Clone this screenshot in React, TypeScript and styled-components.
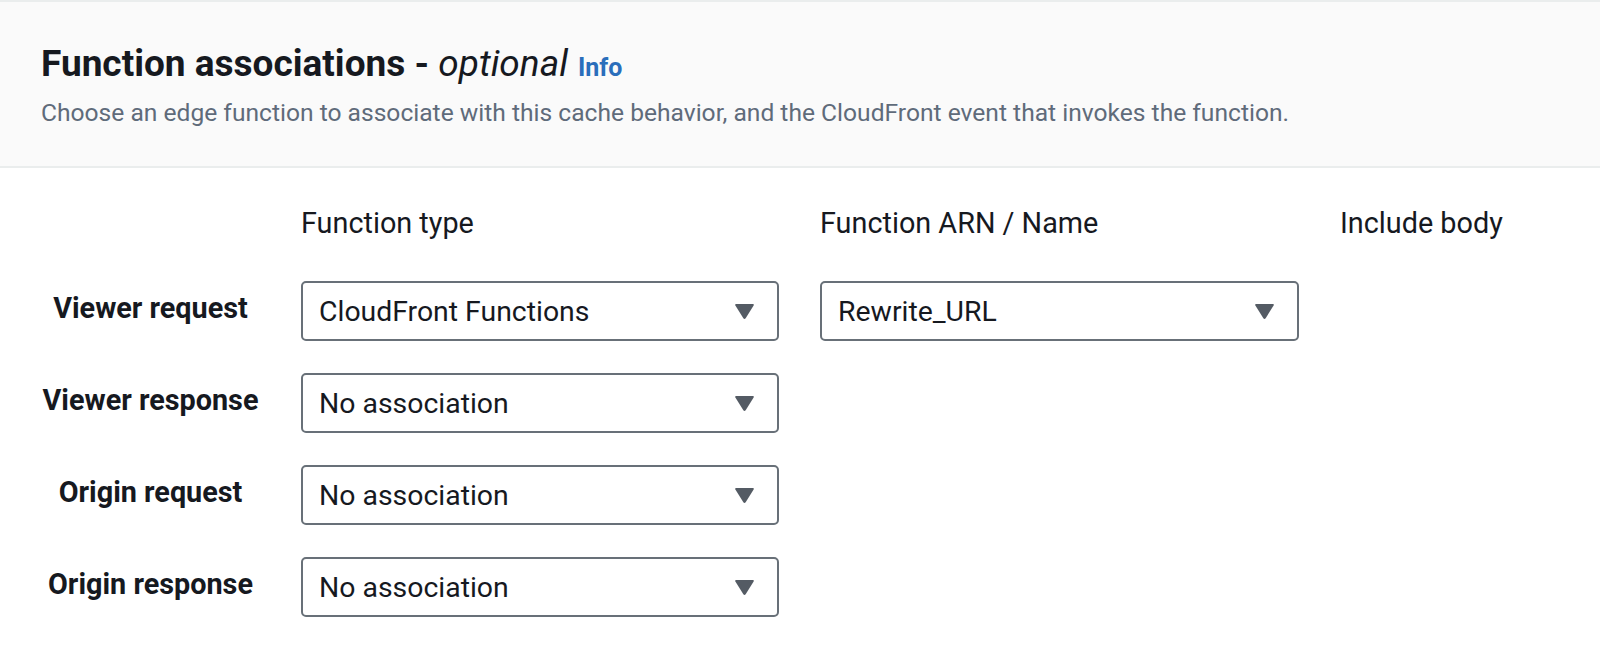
import React from "react";
import styled, { createGlobalStyle } from "styled-components";

const GlobalStyle = createGlobalStyle`
  html, body {
    margin: 0;
    padding: 0;
    background: #ffffff;
  }
  body {
    font-family: Roboto, "Liberation Sans", Arial, sans-serif;
    color: #16191f;
    -webkit-font-smoothing: antialiased;
  }
`;

const Page = styled.div`
  width: 1600px;
  min-height: 660px;
  background: #ffffff;
`;

const Header = styled.header`
  background: #fafafa;
  border-top: 2px solid #eaeded;
  border-bottom: 2px solid #eaeded;
  padding: 40px 40px 0 41px;
  height: 124px;
`;

const Title = styled.h2`
  margin: 0;
  font-size: 37px;
  line-height: 44px;
  font-weight: 700;
  color: #16191f;
  display: flex;
  align-items: baseline;
`;

const Optional = styled.i`
  font-weight: 400;
  font-style: italic;
`;

const InfoLink = styled.a`
  margin-left: 10px;
  font-size: 25px;
  font-weight: 700;
  color: #2a6ebb;
  text-decoration: none;
`;

const Description = styled.p`
  margin: 5px 0 0;
  font-size: 24.6px;
  line-height: 36px;
  color: #5f6b7a;
`;

const Grid = styled.div`
  display: grid;
  grid-template-columns: 219px 478px 479px auto;
  column-gap: 41px;
  row-gap: 32px;
  padding: 35px 0 0 41px;
  align-items: center;
`;

const ColumnHeading = styled.div`
  font-size: 28.8px;
  line-height: 40px;
  color: #16191f;
  margin-bottom: 6px;
`;

const RowLabel = styled.div`
  font-size: 28.8px;
  line-height: 36px;
  font-weight: 700;
  color: #16191f;
  text-align: center;
  margin-top: -6px;
`;

const SelectBox = styled.div`
  box-sizing: border-box;
  height: 60px;
  border: 2px solid #687078;
  border-radius: 5px;
  background: #ffffff;
  display: flex;
  align-items: center;
  justify-content: space-between;
  padding: 0 22px 0 16px;
  font-size: 28.4px;
  color: #16191f;
`;

const SelectValue = styled.span`
  white-space: nowrap;
`;

const Caret = () => (
  <svg width="21" height="18" viewBox="0 0 21 18" aria-hidden="true">
    <path
      d="M2.2 2 H18.8 Q20.4 2 19.6 3.4 L11.8 16 Q10.5 17.8 9.2 16 L1.4 3.4 Q0.6 2 2.2 2 Z"
      fill="#545b64"
    />
  </svg>
);

const Select: React.FC<{ value: string }> = ({ value }) => (
  <SelectBox>
    <SelectValue>{value}</SelectValue>
    <Caret />
  </SelectBox>
);

const Empty = styled.div``;

const rows: { label: string; type: string; arn?: string }[] = [
  { label: "Viewer request", type: "CloudFront Functions", arn: "Rewrite_URL" },
  { label: "Viewer response", type: "No association" },
  { label: "Origin request", type: "No association" },
  { label: "Origin response", type: "No association" },
];

export default function App() {
  return (
    <Page>
      <GlobalStyle />
      <Header>
        <Title>
          Function associations&nbsp;-&nbsp;<Optional>optional</Optional>
          <InfoLink href="#">Info</InfoLink>
        </Title>
        <Description>
          Choose an edge function to associate with this cache behavior, and the CloudFront event that invokes the function.
        </Description>
      </Header>
      <Grid>
        <Empty />
        <ColumnHeading>Function type</ColumnHeading>
        <ColumnHeading>Function ARN / Name</ColumnHeading>
        <ColumnHeading>Include body</ColumnHeading>
        {rows.map((r) => (
          <React.Fragment key={r.label}>
            <RowLabel>{r.label}</RowLabel>
            <Select value={r.type} />
            {r.arn ? <Select value={r.arn} /> : <Empty />}
            <Empty />
          </React.Fragment>
        ))}
      </Grid>
    </Page>
  );
}
